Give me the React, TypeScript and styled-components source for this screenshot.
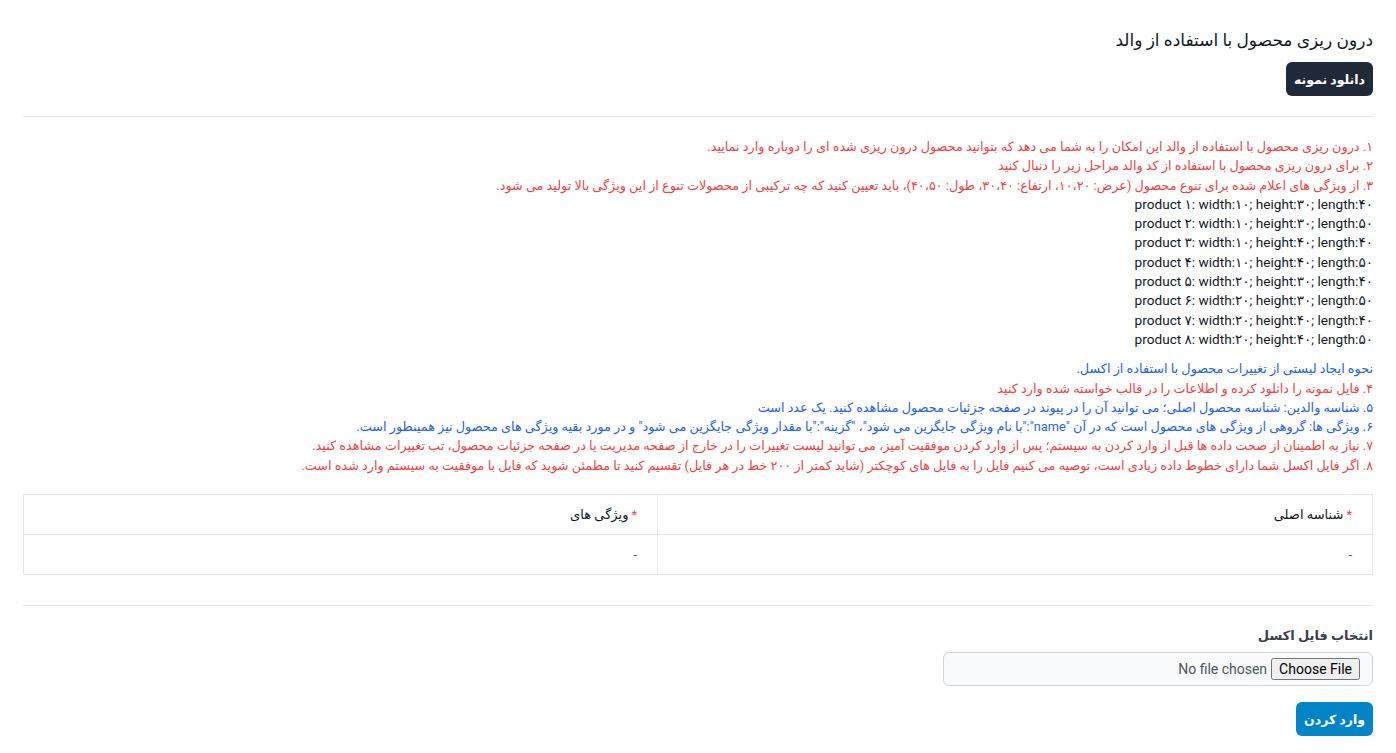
import styled, { createGlobalStyle } from 'styled-components';

const GlobalStyle = createGlobalStyle`
  html, body {
    margin: 0;
    padding: 0;
    background: #ffffff;
  }

  body {
    font-family: Roboto, 'DejaVu Sans', sans-serif;
    color: #111827;
  }
`;

const Page = styled.div`
  direction: rtl;
  padding: 27px 23px 24px;
`;

const Title = styled.h1`
  margin: 0 0 8px;
  font-size: 17px;
  line-height: 27px;
  font-weight: 400;
  color: #111827;
`;

const Button = styled.button<{ $variant: 'dark' | 'primary' }>`
  display: block;
  height: 34px;
  padding: 0 8px;
  border: none;
  border-radius: 6px;
  font-family: inherit;
  font-size: 12.5px;
  font-weight: 700;
  color: #ffffff;
  background: ${(p) => (p.$variant === 'dark' ? '#1f2937' : '#0284c7')};
  cursor: pointer;
`;

const Divider = styled.hr<{ $top: number; $bottom: number }>`
  border: none;
  border-top: 1px solid #e5e7eb;
  margin: ${(p) => p.$top}px 0 ${(p) => p.$bottom}px;
`;

const Notes = styled.div`
  font-size: 12.8px;
  line-height: 19.3px;
`;

const Line = styled.div<{ $tone: 'red' | 'blue' | 'dark' }>`
  color: ${(p) => (p.$tone === 'red' ? '#ef4444' : p.$tone === 'blue' ? '#2563eb' : '#111827')};
`;

const Product = styled.div`
  font-size: 13.6px;
  color: #111827;
  unicode-bidi: plaintext;
  text-align: right;
`;

const Group = styled.div<{ $gap?: number }>`
  margin-top: ${(p) => p.$gap ?? 0}px;
`;

const Table = styled.table`
  width: 100%;
  margin-top: 19px;
  border-collapse: collapse;
  font-size: 13px;
`;

const Cell = styled.td<{ $head?: boolean; $wide?: boolean }>`
  height: 39px;
  padding: 0 20px;
  border: 1px solid #e5e7eb;
  text-align: right;
  color: ${(p) => (p.$head ? '#111827' : '#4b5563')};
  width: ${(p) => (p.$wide ? '53%' : '47%')};
`;

const Star = styled.span`
  color: #ef4444;
  margin-left: 3px;
`;

const Label = styled.label`
  display: block;
  margin-bottom: 7px;
  font-size: 13px;
  line-height: 19px;
  font-weight: 700;
  color: #374151;
`;

const FileInput = styled.input`
  display: block;
  box-sizing: border-box;
  width: 430px;
  height: 34px;
  padding: 5px 12px 0;
  border: 1px solid #d1d5db;
  border-radius: 6px;
  background: #f9fafb;
  font-family: Roboto, sans-serif;
  font-size: 14px;
  color: #4b5563;

  &::file-selector-button {
    font-family: Roboto, sans-serif;
    font-size: 14px;
    margin: 0 0 0 4px;
  }
`;

const Actions = styled.div`
  margin-top: 16px;
`;

const redTop = [
  '۱. درون ریزی محصول با استفاده از والد این امکان را به شما می دهد که بتوانید محصول درون ریزی شده ای را دوباره وارد نمایید.',
  '۲. برای درون ریزی محصول با استفاده از کد والد مراحل زیر را دنبال کنید',
  '۳. از ویژگی های اعلام شده برای تنوع محصول (عرض: ۱۰،۲۰، ارتفاع: ۳۰،۴۰، طول: ۴۰،۵۰)، باید تعیین کنید که چه ترکیبی از محصولات تنوع از این ویژگی بالا تولید می شود.',
];

const products = [
  ['۱', '۱۰', '۳۰', '۴۰'],
  ['۲', '۱۰', '۳۰', '۵۰'],
  ['۳', '۱۰', '۴۰', '۴۰'],
  ['۴', '۱۰', '۴۰', '۵۰'],
  ['۵', '۲۰', '۳۰', '۴۰'],
  ['۶', '۲۰', '۳۰', '۵۰'],
  ['۷', '۲۰', '۴۰', '۴۰'],
  ['۸', '۲۰', '۴۰', '۵۰'],
];

const steps: { tone: 'red' | 'blue'; text: string }[] = [
  { tone: 'blue', text: 'نحوه ایجاد لیستی از تغییرات محصول با استفاده از اکسل.' },
  { tone: 'red', text: '۴. فایل نمونه را دانلود کرده و اطلاعات را در قالب خواسته شده وارد کنید' },
  {
    tone: 'blue',
    text: '۵. شناسه والدین: شناسه محصول اصلی؛ می توانید آن را در پیوند در صفحه جزئیات محصول مشاهده کنید. یک عدد است',
  },
  {
    tone: 'blue',
    text: '۶. ویژگی ها: گروهی از ویژگی های محصول است که در آن "name":"با نام ویژگی جایگزین می شود"، "گزینه":"با مقدار ویژگی جایگزین می شود" و در مورد بقیه ویژگی های محصول نیز همینطور است.',
  },
  {
    tone: 'red',
    text: '۷. نیاز به اطمینان از صحت داده ها قبل از وارد کردن به سیستم؛ پس از وارد کردن موفقیت آمیز، می توانید لیست تغییرات را در خارج از صفحه مدیریت یا در صفحه جزئیات محصول، تب تغییرات مشاهده کنید.',
  },
  {
    tone: 'red',
    text: '۸. اگر فایل اکسل شما دارای خطوط داده زیادی است، توصیه می کنیم فایل را به فایل های کوچکتر (شاید کمتر از ۲۰۰ خط در هر فایل) تقسیم کنید تا مطمئن شوید که فایل با موفقیت به سیستم وارد شده است.',
  },
];

export default function App() {
  return (
    <Page>
      <GlobalStyle />
      <Title>درون ریزی محصول با استفاده از والد</Title>
      <Button $variant="dark">دانلود نمونه</Button>

      <Divider $top={20} $bottom={20} />

      <Notes>
        {redTop.map((t) => (
          <Line key={t} $tone="red">
            {t}
          </Line>
        ))}
        {products.map(([n, w, h, l]) => (
          <Product key={n}>{`product ${n}: width:${w}; height:${h}; length:${l}`}</Product>
        ))}
        <Group $gap={10}>
          {steps.map((s) => (
            <Line key={s.text} $tone={s.tone}>
              {s.text}
            </Line>
          ))}
        </Group>
      </Notes>

      <Table>
        <tbody>
          <tr>
            <Cell $head $wide>
              <Star>*</Star>شناسه اصلی
            </Cell>
            <Cell $head>
              <Star>*</Star>ویژگی های
            </Cell>
          </tr>
          <tr>
            <Cell $wide>-</Cell>
            <Cell>-</Cell>
          </tr>
        </tbody>
      </Table>

      <Divider $top={30} $bottom={20} />

      <Label>انتخاب فایل اکسل</Label>
      <FileInput type="file" />
      <Actions>
        <Button $variant="primary">وارد کردن</Button>
      </Actions>
    </Page>
  );
}
